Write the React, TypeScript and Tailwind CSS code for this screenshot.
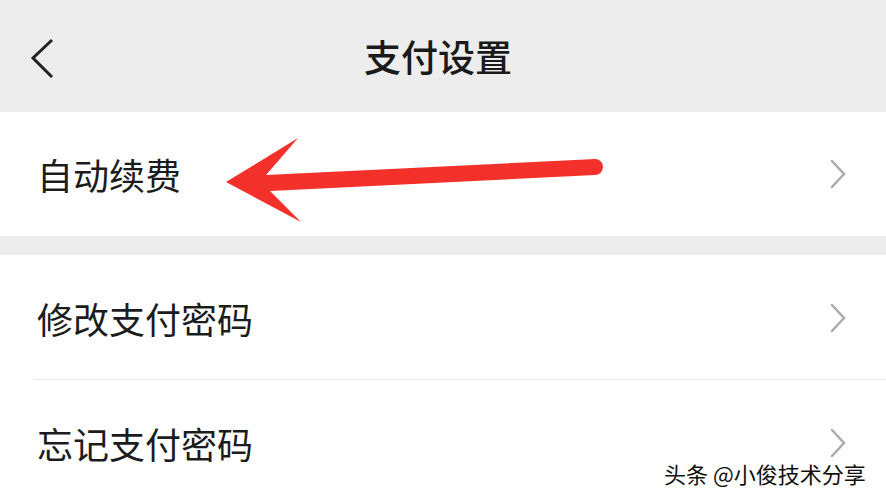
const cjk = { fontFamily: '"Noto Sans CJK SC", "Noto Sans", sans-serif' };

const Chevron = () => (
    <svg width="20" height="32" viewBox="0 0 20 32" className="shrink-0">
        <path d="M4 3 L16 16 L4 29" fill="none" stroke="#ababab" strokeWidth="2.5" strokeLinecap="round" />
    </svg>
);

const Row = ({ label, divider, height }: { label: string; divider?: boolean; height: string }) => (
    <div className={`relative flex items-center justify-between bg-white pl-[37px] pr-[38px] ${height}`}>
        <span className="text-[36px] leading-none text-[#1c1c1c]" style={cjk}>
            {label}
        </span>
        <Chevron />
        {divider && <div className="absolute bottom-0 left-[34px] right-0 h-px bg-[#ececec]" />}
    </div>
);

export default function App() {
    return (
        <div className="relative w-[886px] h-[500px] overflow-hidden bg-white">
            <div className="flex flex-col">
                <div className="relative flex items-center justify-center h-[112px] bg-[#ededed]">
                    <svg width="30" height="44" viewBox="0 0 30 44" className="absolute left-[28px] top-[37px]">
                        <path d="M24 3 L5 21 L24 40" fill="none" stroke="#222" strokeWidth="3" />
                    </svg>
                    <span className="mr-[10px] text-[37px] font-medium leading-none text-[#1a1a1a]" style={cjk}>
                        支付设置
                    </span>
                </div>
                <Row label="自动续费" height="h-[124px]" />
                <div className="h-[19px] bg-[#ededed]" />
                <Row label="修改支付密码" height="h-[125px]" divider />
                <Row label="忘记支付密码" height="h-[126px]" />
            </div>

            <svg width="886" height="500" className="absolute inset-0 pointer-events-none">
                <path
                    d="M226 182 L298 138 L266 175 L595 159 A8 8 0 0 1 595 175 L270 191 L301 222 Z"
                    fill="#f4302b"
                />
            </svg>

            <div
                className="absolute left-[664px] top-[462px] text-[22px] leading-none text-[#111]"
                style={{
                    ...cjk,
                    textShadow: "1px 0 0 #fff, -1px 0 0 #fff, 0 1px 0 #fff, 0 -1px 0 #fff",
                }}
            >
                头条 @小俊技术分享
            </div>
        </div>
    );
}
